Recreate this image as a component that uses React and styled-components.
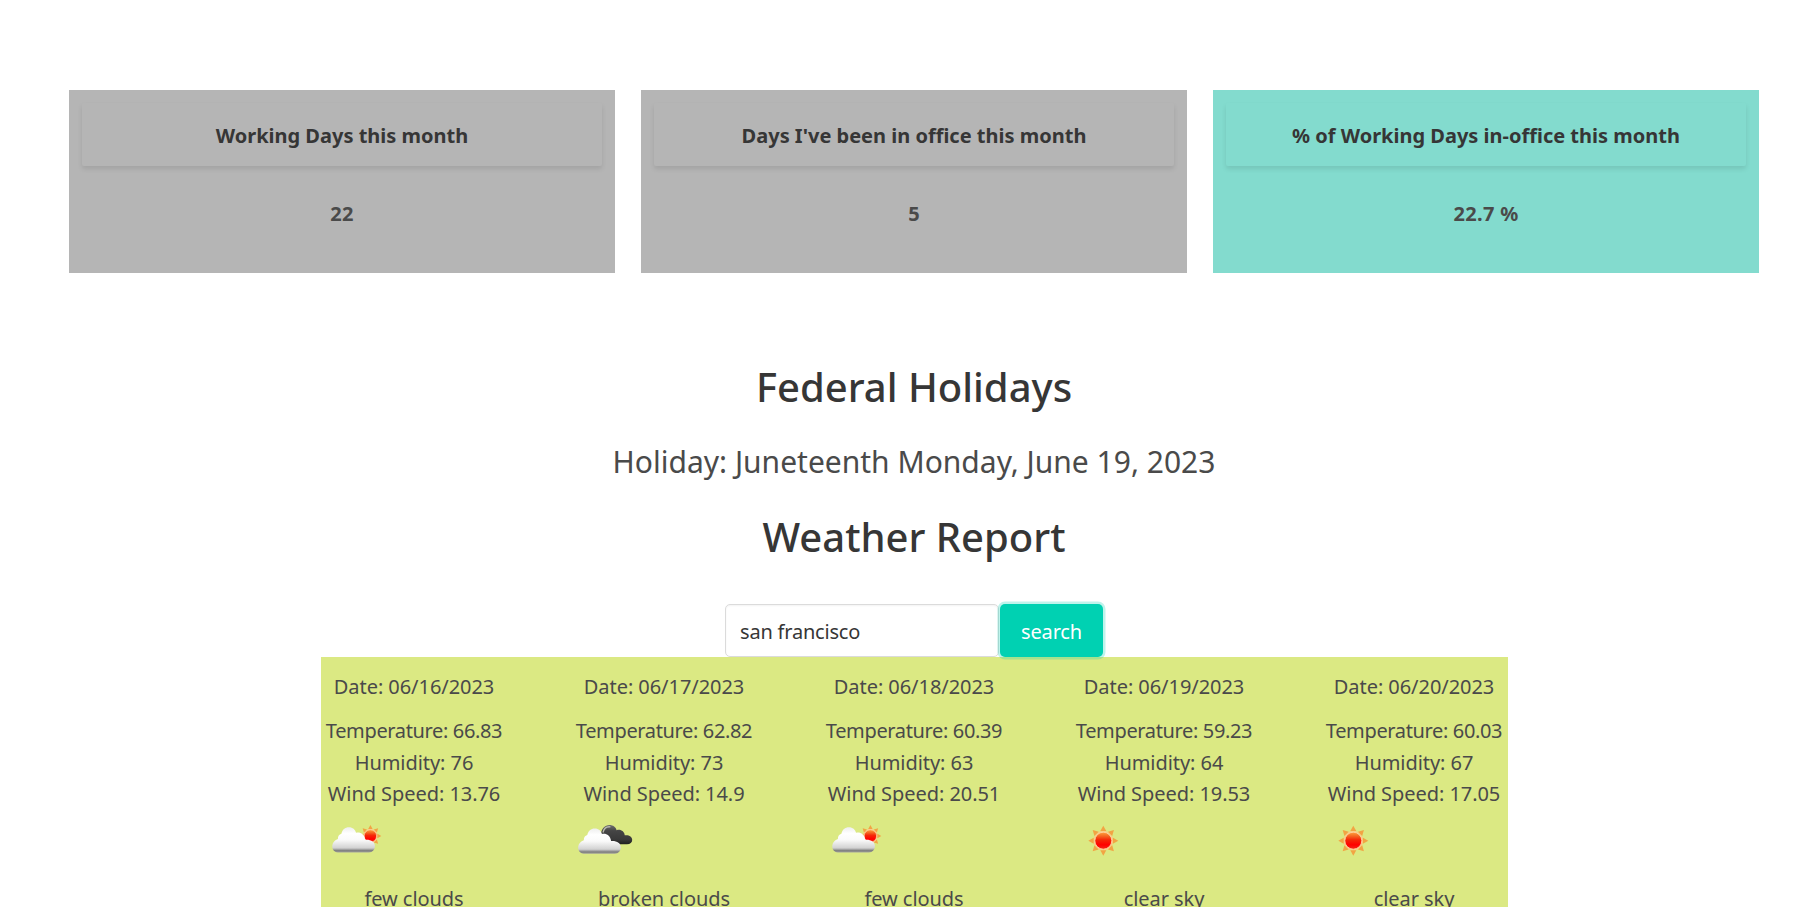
import React, { useState } from "react";
import styled, { createGlobalStyle } from "styled-components";

const GlobalStyle = createGlobalStyle`
  *, *::before, *::after { box-sizing: border-box; }
  html, body { margin: 0; padding: 0; background: #fff; }
  body {
    color: #4a4a4a;
    font-family: "Segoe UI", "Noto Sans", "Open Sans", sans-serif;
    font-size: 20px;
    line-height: 32px;
  }
`;

const Page = styled.main`
  height: 907px;
  overflow: hidden;
  padding: 90px 0 0 14px;
  display: flex;
  flex-direction: column;
`;

const Stats = styled.section`
  display: grid;
  grid-template-columns: repeat(3, 546px);
  column-gap: 26px;
  margin-left: 55px;
`;

const StatCard = styled.article`
  height: 183px;
  padding: 13px;
  background: ${({ $accent }) => ($accent ? "#83dbce" : "#b5b5b5")};
  text-align: center;
  font-weight: 700;
`;

const StatTitle = styled.header`
  display: flex;
  align-items: center;
  justify-content: center;
  height: 63px;
  padding-top: 2px;
  border-radius: 2px;
  color: #363636;
  box-shadow: 0 3px 5px rgba(10, 10, 10, 0.1);
`;

const StatValue = styled.p`
  margin: 32px 0 0;
  letter-spacing: 0.3px;
`;

const Heading = styled.h2`
  margin: ${({ $top }) => $top}px 0 0;
  color: #363636;
  font-size: 40px;
  font-weight: 500;
  line-height: 45px;
  text-align: center;
`;

const Holiday = styled.p`
  margin: 30px 0 0;
  font-size: 30px;
  line-height: 45px;
  text-align: center;
`;

const SearchForm = styled.form`
  display: flex;
  justify-content: center;
  gap: 1px;
  margin-top: 45px;
`;

const CityInput = styled.input`
  width: 274px;
  height: 53px;
  padding: 1px 14px 0;
  border: 1px solid #dbdbdb;
  border-radius: 5px;
  outline: none;
  background: #fff;
  box-shadow: inset 0 1px 2px rgba(10, 10, 10, 0.05);
  color: #363636;
  font: inherit;
  letter-spacing: -0.2px;
`;

const SearchButton = styled.button`
  position: relative;
  z-index: 1;
  width: 103px;
  height: 53px;
  padding: 2px 0 0;
  border: 0;
  border-radius: 5px;
  background: #00d1b2;
  box-shadow: 0 0 0 2.5px rgba(0, 209, 178, 0.25);
  color: #fff;
  font: inherit;
  letter-spacing: -0.15px;
`;

const Forecast = styled.section`
  flex: none;
  display: flex;
  justify-content: space-between;
  width: 1187px;
  height: 280px;
  margin: 0 auto;
  padding-top: 14px;
  background: #dbe983;
  letter-spacing: -0.06px;
`;

const Day = styled.article`
  width: 187px;
  text-align: center;
`;

const DayDate = styled.p`
  margin: 0 0 12px;
`;

const Reading = styled.p`
  margin: 0;
  line-height: 31.67px;
  letter-spacing: ${({ $tight }) => ($tight ? "-0.36px" : "inherit")};
`;

const IconBox = styled.div`
  height: 73px;
  svg { display: block; }
`;

const Description = styled.p`
  margin: 0;
`;

const RAYS = [0, 45, 90, 135, 180, 225, 270, 315];

function Sun({ id, x, y, r }) {
  return (
    <g transform={`translate(${x} ${y}) scale(${r / 8.5})`}>
      <defs>
        <linearGradient id={id} x1="0" y1="0" x2="0" y2="1">
          <stop offset="0" stopColor="#ffa13d" />
          <stop offset="0.22" stopColor="#f56a24" />
          <stop offset="0.45" stopColor="#f52708" />
          <stop offset="0.75" stopColor="#ff0000" />
          <stop offset="1" stopColor="#f52a1c" />
        </linearGradient>
      </defs>
      <circle r="10" fill="#f6cf84" />
      {RAYS.map((a) => (
        <path key={a} d="M-3 -9.6 L0 -15 L3 -9.6 Z" fill="#f2a444" transform={`rotate(${a})`} />
      ))}
      <circle r="8.5" fill={`url(#${id})`} stroke="#ffd0a0" strokeWidth="0.9" />
    </g>
  );
}

function Cloud({ id, x, y }) {
  return (
    <g transform={`translate(${x} ${y})`}>
      <defs>
        <linearGradient id={id} x1="0" y1="0" x2="0" y2="1">
          <stop offset="0" stopColor="#eeeeee" />
          <stop offset="0.25" stopColor="#ffffff" />
          <stop offset="0.5" stopColor="#fafafa" />
          <stop offset="0.82" stopColor="#d2d2d2" />
          <stop offset="0.93" stopColor="#7c7c7c" />
          <stop offset="1" stopColor="#a5a5a0" />
        </linearGradient>
      </defs>
      <path
        d="M6 25.5 C2 25 0 22 .4 18.5 C.8 15 3 13.2 6 12 C6 9 7.2 7.4 9.5 6.8 C10.5 2.5 13 .2 17 .2 C21 .2 23.3 2.6 24.2 5.8 C28 4.7 32.5 7 33.3 12.7 C39 12.3 43 14.8 43 19 C43 22.5 40.8 25.5 37 25.5 Z"
        fill={`url(#${id})`}
      />
    </g>
  );
}

function DarkCloud({ id }) {
  return (
    <g>
      <defs>
        <linearGradient id={id} x1="0" y1="0" x2="0" y2="1">
          <stop offset="0" stopColor="#707070" />
          <stop offset="0.3" stopColor="#454545" />
          <stop offset="0.75" stopColor="#393939" />
          <stop offset="1" stopColor="#202020" />
        </linearGradient>
      </defs>
      <path
        d="M30 25 C30.5 19.5 34 16 38.3 16 C42.3 16 44.8 18.2 45.6 21.2 C49.6 19.8 53.5 22.5 53.7 26.3 C58 25.7 61.2 27.8 61.2 31 C61.2 33.7 59.2 35.2 56 35.2 H42 Z"
        fill={`url(#${id})`}
      />
      <path d="M32 23.5 C33 19.2 36.2 17.4 39.4 17.8" fill="none" stroke="#b8b8ae" strokeWidth="1.3" />
    </g>
  );
}

function WeatherIcon({ kind, id }) {
  return (
    <svg width="66" height="66" viewBox="0 1 66 66" aria-hidden="true">
      {kind === "few clouds" && (
        <>
          <Sun id={`${id}-sun`} x={49.4} y={27} r={6.2} />
          <Cloud id={`${id}-cloud`} x={10.9} y={18} />
        </>
      )}
      {kind === "broken clouds" && (
        <>
          <DarkCloud id={`${id}-back`} />
          <Cloud id={`${id}-cloud`} x={6.8} y={19.3} />
        </>
      )}
      {kind === "clear sky" && <Sun id={`${id}-sun`} x={32.3} y={31.7} r={8.5} />}
    </svg>
  );
}

const STATS = [
  { title: "Working Days this month", value: "22" },
  { title: "Days I've been in office this month", value: "5" },
  { title: "% of Working Days in-office this month", value: "22.7 %", accent: true },
];

const DAYS = [
  { date: "06/16/2023", temp: "66.83", humidity: "76", wind: "13.76", sky: "few clouds" },
  { date: "06/17/2023", temp: "62.82", humidity: "73", wind: "14.9", sky: "broken clouds" },
  { date: "06/18/2023", temp: "60.39", humidity: "63", wind: "20.51", sky: "few clouds" },
  { date: "06/19/2023", temp: "59.23", humidity: "64", wind: "19.53", sky: "clear sky" },
  { date: "06/20/2023", temp: "60.03", humidity: "67", wind: "17.05", sky: "clear sky" },
];

export default function App() {
  const [city, setCity] = useState("san francisco");
  return (
    <>
      <GlobalStyle />
      <Page>
        <Stats>
          {STATS.map((s) => (
            <StatCard key={s.title} $accent={s.accent}>
              <StatTitle>{s.title}</StatTitle>
              <StatValue>{s.value}</StatValue>
            </StatCard>
          ))}
        </Stats>
        <Heading $top={91}>Federal Holidays</Heading>
        <Holiday>Holiday: Juneteenth Monday, June 19, 2023</Holiday>
        <Heading $top={30}>Weather Report</Heading>
        <SearchForm onSubmit={(e) => e.preventDefault()}>
          <CityInput value={city} onChange={(e) => setCity(e.target.value)} />
          <SearchButton>search</SearchButton>
        </SearchForm>
        <Forecast>
          {DAYS.map((d, i) => (
            <Day key={d.date}>
              <DayDate>Date: {d.date}</DayDate>
              <Reading $tight>Temperature: {d.temp}</Reading>
              <Reading>Humidity: {d.humidity}</Reading>
              <Reading>Wind Speed: {d.wind}</Reading>
              <IconBox>
                <WeatherIcon kind={d.sky} id={`day${i}`} />
              </IconBox>
              <Description>{d.sky}</Description>
            </Day>
          ))}
        </Forecast>
      </Page>
    </>
  );
}
